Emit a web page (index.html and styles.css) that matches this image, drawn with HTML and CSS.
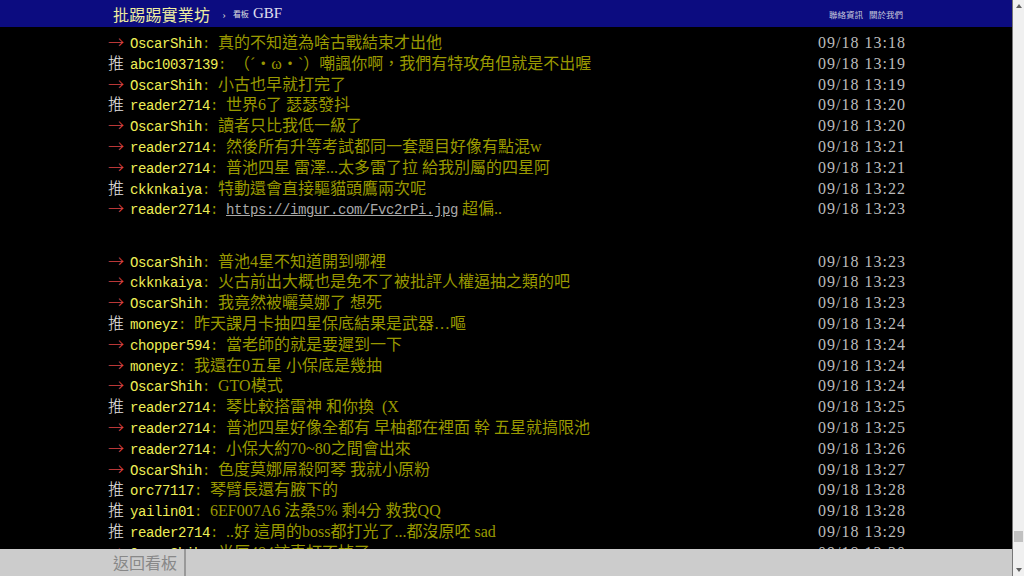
FILE: index.html
```html
<!DOCTYPE html>
<html lang="zh-Hant">
<head>
  <meta charset="UTF-8" />
  <meta name="viewport" content="width=device-width, initial-scale=1.0" />
  <title>批踢踢實業坊 › 看板 GBF</title>
  <link rel="stylesheet" href="styles.css">
</head>
<body>
  <div class="page">
    <div class="topbar">
      <div class="topbar-inner">
        <a class="logo">批踢踢實業坊</a>
        <span class="crumb-sep">›</span>
        <span class="crumb-label">看板</span>
        <a class="board">GBF</a>
        <div class="top-links">
          <a>聯絡資訊</a>
          <a>關於我們</a>
        </div>
      </div>
    </div>

    <div class="main">
      <div class="bbs-screen">
        <div class="push"><span class="push-tag arrow">→</span><span class="push-userid">OscarShih</span><span class="push-content"><span class="sep">: </span>真的不知道為啥古戰結束才出他</span><span class="push-ipdatetime">09/18 13:18</span></div>
        <div class="push"><span class="push-tag good">推</span><span class="push-userid">abc10037139</span><span class="push-content"><span class="sep">: </span>（ˊ・ω・ˋ）嘲諷你啊，我們有特攻角但就是不出喔</span><span class="push-ipdatetime">09/18 13:19</span></div>
        <div class="push"><span class="push-tag arrow">→</span><span class="push-userid">OscarShih</span><span class="push-content"><span class="sep">: </span>小古也早就打完了</span><span class="push-ipdatetime">09/18 13:19</span></div>
        <div class="push"><span class="push-tag good">推</span><span class="push-userid">reader2714</span><span class="push-content"><span class="sep">: </span>世界6了 瑟瑟發抖</span><span class="push-ipdatetime">09/18 13:20</span></div>
        <div class="push"><span class="push-tag arrow">→</span><span class="push-userid">OscarShih</span><span class="push-content"><span class="sep">: </span>讀者只比我低一級了</span><span class="push-ipdatetime">09/18 13:20</span></div>
        <div class="push"><span class="push-tag arrow">→</span><span class="push-userid">reader2714</span><span class="push-content"><span class="sep">: </span>然後所有升等考試都同一套題目好像有點混w</span><span class="push-ipdatetime">09/18 13:21</span></div>
        <div class="push"><span class="push-tag arrow">→</span><span class="push-userid">reader2714</span><span class="push-content"><span class="sep">: </span>普池四星 雷澤...太多雷了拉 給我別屬的四星阿</span><span class="push-ipdatetime">09/18 13:21</span></div>
        <div class="push"><span class="push-tag good">推</span><span class="push-userid">ckknkaiya</span><span class="push-content"><span class="sep">: </span>特動還會直接驅貓頭鷹兩次呢</span><span class="push-ipdatetime">09/18 13:22</span></div>
        <div class="push"><span class="push-tag arrow">→</span><span class="push-userid">reader2714</span><span class="push-content"><span class="sep">: </span><a class="link">https://imgur.com/Fvc2rPi.jpg</a> 超偏..</span><span class="push-ipdatetime">09/18 13:23</span></div>
        <div class="richcontent"></div>
        <div class="push"><span class="push-tag arrow">→</span><span class="push-userid">OscarShih</span><span class="push-content"><span class="sep">: </span>普池4星不知道開到哪裡</span><span class="push-ipdatetime">09/18 13:23</span></div>
        <div class="push"><span class="push-tag arrow">→</span><span class="push-userid">ckknkaiya</span><span class="push-content"><span class="sep">: </span>火古前出大概也是免不了被批評人權逼抽之類的吧</span><span class="push-ipdatetime">09/18 13:23</span></div>
        <div class="push"><span class="push-tag arrow">→</span><span class="push-userid">OscarShih</span><span class="push-content"><span class="sep">: </span>我竟然被曬莫娜了 想死</span><span class="push-ipdatetime">09/18 13:23</span></div>
        <div class="push"><span class="push-tag good">推</span><span class="push-userid">moneyz</span><span class="push-content"><span class="sep">: </span>昨天課月卡抽四星保底結果是武器…嘔</span><span class="push-ipdatetime">09/18 13:24</span></div>
        <div class="push"><span class="push-tag arrow">→</span><span class="push-userid">chopper594</span><span class="push-content"><span class="sep">: </span>當老師的就是要遲到一下</span><span class="push-ipdatetime">09/18 13:24</span></div>
        <div class="push"><span class="push-tag arrow">→</span><span class="push-userid">moneyz</span><span class="push-content"><span class="sep">: </span>我還在0五星 小保底是幾抽</span><span class="push-ipdatetime">09/18 13:24</span></div>
        <div class="push"><span class="push-tag arrow">→</span><span class="push-userid">OscarShih</span><span class="push-content"><span class="sep">: </span>GTO模式</span><span class="push-ipdatetime">09/18 13:24</span></div>
        <div class="push"><span class="push-tag good">推</span><span class="push-userid">reader2714</span><span class="push-content"><span class="sep">: </span>琴比較搭雷神 和你換  (X</span><span class="push-ipdatetime">09/18 13:25</span></div>
        <div class="push"><span class="push-tag arrow">→</span><span class="push-userid">reader2714</span><span class="push-content"><span class="sep">: </span>普池四星好像全都有 早柚都在裡面 幹 五星就搞限池</span><span class="push-ipdatetime">09/18 13:25</span></div>
        <div class="push"><span class="push-tag arrow">→</span><span class="push-userid">reader2714</span><span class="push-content"><span class="sep">: </span>小保大約70~80之間會出來</span><span class="push-ipdatetime">09/18 13:26</span></div>
        <div class="push"><span class="push-tag arrow">→</span><span class="push-userid">OscarShih</span><span class="push-content"><span class="sep">: </span>色度莫娜屌殺阿琴 我就小原粉</span><span class="push-ipdatetime">09/18 13:27</span></div>
        <div class="push"><span class="push-tag good">推</span><span class="push-userid">orc77117</span><span class="push-content"><span class="sep">: </span>琴臂長還有腋下的</span><span class="push-ipdatetime">09/18 13:28</span></div>
        <div class="push"><span class="push-tag good">推</span><span class="push-userid">yailin01</span><span class="push-content"><span class="sep">: </span>6EF007A6 法桑5% 剩4分 救我QQ</span><span class="push-ipdatetime">09/18 13:28</span></div>
        <div class="push"><span class="push-tag good">推</span><span class="push-userid">reader2714</span><span class="push-content"><span class="sep">: </span>..好 這周的boss都打光了...都沒原呸 sad</span><span class="push-ipdatetime">09/18 13:29</span></div>
        <div class="push"><span class="push-tag arrow">→</span><span class="push-userid">OscarShih</span><span class="push-content"><span class="sep">: </span>光厘484該喜打不掉了</span><span class="push-ipdatetime">09/18 13:30</span></div>
      </div>
    </div>

    <div class="action-bar">
      <div class="action-inner">
        <a class="btn">返回看板</a>
      </div>
    </div>
  </div>

  <div class="scrollbar">
    <div class="sb-btn"><span class="tri-up"></span></div>
    <div class="sb-track"><div class="sb-thumb"></div></div>
    <div class="sb-btn"><span class="tri-down"></span></div>
  </div>
</body>
</html>
```

FILE: styles.css
```css
* {
  box-sizing: border-box;
  margin: 0;
  padding: 0;
}
html, body {
  height: 100%;
  overflow: hidden;
}
body {
  display: flex;
  background: #000;
  font-family: "Liberation Serif", "Noto Sans CJK TC", serif;
  color: #bbb;
}
a {
  text-decoration: none;
  color: inherit;
}
.page {
  width: 1012px;
  flex: none;
  display: flex;
  flex-direction: column;
  height: 100%;
}

/* top bar */
.topbar {
  height: 27px;
  flex: none;
  background: #0c0c80;
}
.topbar-inner {
  width: 800px;
  height: 100%;
  margin: 0 auto;
  padding: 0 3px 0 7px;
  display: flex;
  align-items: center;
}
.logo {
  font-family: "Noto Sans CJK TC", sans-serif;
  font-size: 16px;
  letter-spacing: 0.2px;
  color: #eeeea0;
}
.crumb-sep {
  margin-left: 12px;
  font-size: 11px;
  color: #ccc;
}
.crumb-label {
  margin-left: 7px;
  font-family: "Noto Sans CJK TC", sans-serif;
  font-size: 8px;
  color: #ddd;
}
.board {
  margin-left: 4px;
  font-size: 15px;
  color: #e0e0f0;
}
.top-links {
  margin-left: auto;
  display: flex;
  gap: 6px;
  font-family: "Noto Sans CJK TC", sans-serif;
  font-size: 8.5px;
  color: #c8c8dc;
}

/* pushes */
.main {
  flex: 1;
  overflow: hidden;
}
.bbs-screen {
  width: 800px;
  margin: 0 auto;
  padding-top: 4px;
  font-size: 16px;
}
.push {
  display: flex;
  align-items: baseline;
  height: 20.8px;
  line-height: 20.8px;
  white-space: pre;
}
.push-tag {
  flex: none;
  width: 24px;
  padding-left: 2px;
  font-family: "Noto Sans CJK TC", sans-serif;
  font-weight: 300;
}
.push-tag.arrow {
  color: #d44;
}
.push-tag.good {
  color: #e8e8e8;
}
.push-userid,
.sep,
.link {
  font-family: "Liberation Mono", monospace;
  font-size: 14px;
  letter-spacing: -0.4px;
}
.push-userid {
  color: #ee5;
}
.push-content {
  flex: 1;
  overflow: hidden;
  color: #990;
}
.link {
  color: #aaa;
  text-decoration: underline;
}
.push-ipdatetime {
  flex: none;
  letter-spacing: 1px;
  color: #bbb;
}
.richcontent {
  height: 31.4px;
}

/* bottom action bar */
.action-bar {
  height: 27px;
  flex: none;
  background: #ccc;
}
.action-inner {
  width: 800px;
  height: 100%;
  margin: 0 auto;
  display: flex;
}
.btn {
  padding: 0 7px 0 7px;
  border-right: 2px solid #999;
  font-family: "Noto Sans CJK TC", sans-serif;
  font-size: 16px;
  line-height: 27px;
  color: #888;
}

/* scrollbar */
.scrollbar {
  flex: 1;
  display: flex;
  flex-direction: column;
  border-left: 1px solid #777;
  background: #f0f0f0;
}
.sb-btn {
  height: 12px;
  flex: none;
  display: flex;
  align-items: center;
  justify-content: center;
}
.tri-up {
  border-left: 3px solid transparent;
  border-right: 3px solid transparent;
  border-bottom: 4px solid #606060;
}
.tri-down {
  border-left: 3px solid transparent;
  border-right: 3px solid transparent;
  border-top: 4px solid #606060;
}
.sb-track {
  flex: 1;
  display: flex;
  flex-direction: column;
  justify-content: flex-end;
  padding: 0 1px 22px 1px;
}
.sb-thumb {
  height: 11px;
  background: #c1c1c1;
}
```
